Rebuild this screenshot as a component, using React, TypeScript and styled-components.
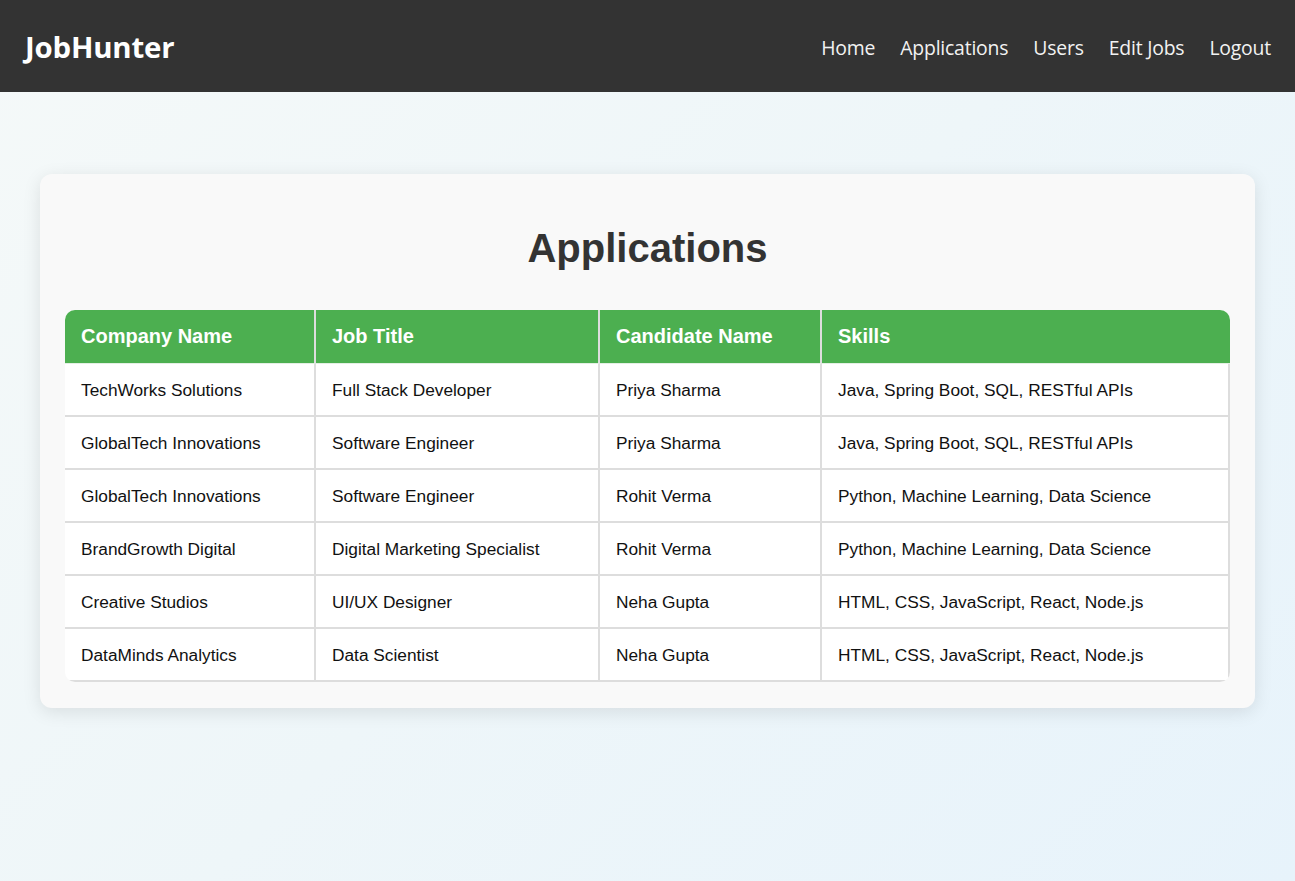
import React from "react";
import styled, { createGlobalStyle } from "styled-components";

const GlobalStyle = createGlobalStyle`
  html, body {
    margin: 0;
    padding: 0;
  }
  body {
    min-height: 881px;
    background: linear-gradient(135deg, #f5f9f9 0%, #eef6f9 50%, #e7f3fb 100%);
    font-family: "Liberation Sans", Arial, sans-serif;
  }
`;

const Page = styled.div`
  min-height: 881px;
`;

const NavBar = styled.header`
  height: 92px;
  background: #333333;
  display: flex;
  align-items: center;
  justify-content: space-between;
  padding: 0 24px 0 25px;
  box-sizing: border-box;
`;

const Logo = styled.div`
  font-family: "Open Sans", "Noto Sans", sans-serif;
  font-weight: 700;
  font-size: 29.4px;
  color: #ffffff;
  letter-spacing: -0.2px;
  margin-top: 2px;
`;

const NavLinks = styled.nav`
  display: flex;
  align-items: center;
  gap: 25px;
  margin-top: 2px;
`;

const NavLink = styled.a`
  font-family: "Open Sans", "Noto Sans", sans-serif;
  font-size: 19.4px;
  color: #f2f2f2;
  text-decoration: none;
  letter-spacing: -0.2px;
`;

const Main = styled.main`
  padding: 82px 40px;
`;

const Card = styled.section`
  background: #f9f9f9;
  border-radius: 12px;
  box-shadow: 0 4px 18px rgba(0, 0, 0, 0.1);
  padding: 25px 25px 26px;
`;

const Title = styled.h1`
  margin: 26px 0 39px;
  text-align: center;
  font-family: "Liberation Sans", Arial, sans-serif;
  font-size: 40px;
  font-weight: 700;
  color: #333333;
  line-height: 46px;
`;

const Table = styled.table`
  width: 100%;
  border-collapse: separate;
  border-spacing: 0;
  border-radius: 10px;
  overflow: hidden;
  background: #ffffff;
  table-layout: fixed;
`;

const HeadCell = styled.th<{ $last?: boolean }>`
  background: #4caf50;
  color: #ffffff;
  font-family: "Liberation Sans", Arial, sans-serif;
  font-size: 20px;
  font-weight: 700;
  text-align: left;
  padding: 15px 16px;
  line-height: 23px;
  border-right: ${(p) => (p.$last ? "none" : "2px solid #dddddd")};
  border-bottom: 1px solid #e4efe4;
`;

const Cell = styled.td`
  font-family: "Liberation Sans", Arial, sans-serif;
  font-size: 17.3px;
  color: #111111;
  padding: 16px 16px 14px;
  line-height: 21px;
  border-right: 2px solid #dddddd;
  border-bottom: 2px solid #dddddd;
  white-space: nowrap;
`;

const columns = [
  { label: "Company Name", width: 251 },
  { label: "Job Title", width: 284 },
  { label: "Candidate Name", width: 222 },
  { label: "Skills", width: 408 },
];

const rows = [
  ["TechWorks Solutions", "Full Stack Developer", "Priya Sharma", "Java, Spring Boot, SQL, RESTful APIs"],
  ["GlobalTech Innovations", "Software Engineer", "Priya Sharma", "Java, Spring Boot, SQL, RESTful APIs"],
  ["GlobalTech Innovations", "Software Engineer", "Rohit Verma", "Python, Machine Learning, Data Science"],
  ["BrandGrowth Digital", "Digital Marketing Specialist", "Rohit Verma", "Python, Machine Learning, Data Science"],
  ["Creative Studios", "UI/UX Designer", "Neha Gupta", "HTML, CSS, JavaScript, React, Node.js"],
  ["DataMinds Analytics", "Data Scientist", "Neha Gupta", "HTML, CSS, JavaScript, React, Node.js"],
];

export default function App() {
  return (
    <Page>
      <GlobalStyle />
      <NavBar>
        <Logo>JobHunter</Logo>
        <NavLinks>
          <NavLink href="#">Home</NavLink>
          <NavLink href="#">Applications</NavLink>
          <NavLink href="#">Users</NavLink>
          <NavLink href="#">Edit Jobs</NavLink>
          <NavLink href="#">Logout</NavLink>
        </NavLinks>
      </NavBar>
      <Main>
        <Card>
          <Title>Applications</Title>
          <Table>
            <colgroup>
              {columns.map((c) => (
                <col key={c.label} style={{ width: c.width }} />
              ))}
            </colgroup>
            <thead>
              <tr>
                {columns.map((c, i) => (
                  <HeadCell key={c.label} $last={i === columns.length - 1}>
                    {c.label}
                  </HeadCell>
                ))}
              </tr>
            </thead>
            <tbody>
              {rows.map((r, ri) => (
                <tr key={ri}>
                  {r.map((v, ci) => (
                    <Cell key={ci}>{v}</Cell>
                  ))}
                </tr>
              ))}
            </tbody>
          </Table>
        </Card>
      </Main>
    </Page>
  );
}
